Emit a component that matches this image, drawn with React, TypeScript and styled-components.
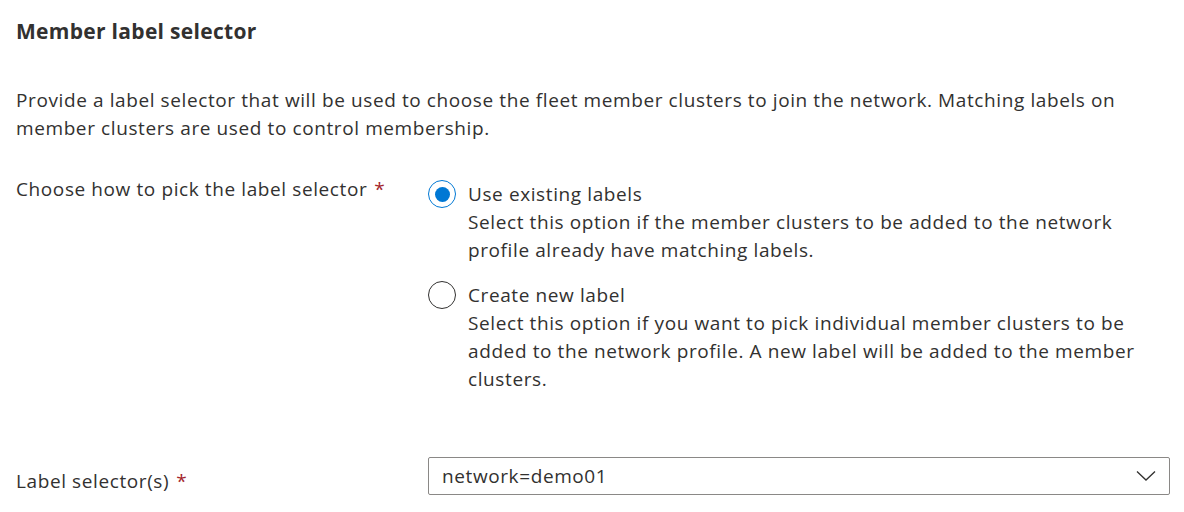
import styled, { createGlobalStyle } from 'styled-components';
import { FC, useState } from 'react';

const GlobalStyle = createGlobalStyle`
  body {
    margin: 0;
    background: #fff;
    font-family: 'Open Sans', 'Noto Sans', sans-serif;
    color: #323130;
  }
`;

type Option = {
  id: string;
  label: string;
  description: string;
};

const options: Option[] = [
  {
    id: 'existing',
    label: 'Use existing labels',
    description:
      'Select this option if the member clusters to be added to the network profile already have matching labels.',
  },
  {
    id: 'new',
    label: 'Create new label',
    description:
      'Select this option if you want to pick individual member clusters to be added to the network profile. A new label will be added to the member clusters.',
  },
];

const SC = {
  Section: styled.section`
    padding: 17px 14px 0 16px;
    font-size: 19px;
    letter-spacing: 0.6px;
    line-height: 28px;
  `,
  Title: styled.h2`
    margin: 0;
    font-size: 21px;
    letter-spacing: 0.3px;
    line-height: 28px;
    font-weight: 700;
  `,
  Intro: styled.p`
    margin: 41px 0 33px;
  `,
  FieldRow: styled.div<{ $gap?: number }>`
    display: grid;
    grid-template-columns: 412px 1fr;
    align-items: start;
    margin-top: ${(p) => p.$gap ?? 0}px;
  `,
  FieldLabel: styled.label<{ $offset?: number }>`
    padding-top: ${(p) => p.$offset ?? 0}px;
  `,
  Required: styled.span`
    color: #a4262c;
    margin-left: 7px;
  `,
  RadioGroup: styled.div`
    display: flex;
    flex-direction: column;
    row-gap: 17px;
    padding-top: 5px;
  `,
  RadioOption: styled.label`
    display: flex;
    column-gap: 12px;
    cursor: pointer;
  `,
  RadioCircle: styled.span<{ $checked: boolean }>`
    flex: none;
    box-sizing: border-box;
    width: 28px;
    height: 28px;
    border-radius: 50%;
    border: ${(p) => (p.$checked ? '1.5px solid #0078d4' : '1px solid #323130')};
    display: flex;
    align-items: center;
    justify-content: center;

    &::after {
      content: '';
      width: 15px;
      height: 15px;
      border-radius: 50%;
      background: ${(p) => (p.$checked ? '#0078d4' : 'transparent')};
    }
  `,
  OptionText: styled.div`
    display: flex;
    flex-direction: column;
  `,
  Dropdown: styled.div`
    box-sizing: border-box;
    height: 38px;
    display: flex;
    align-items: center;
    justify-content: space-between;
    padding: 0 13px 0 13px;
    border: 1px solid #8a8886;
    border-radius: 2px;
  `,
  Chevron: styled.svg`
    width: 20px;
    height: 12px;
  `,
};

const App: FC = () => {
  const [picked, setPicked] = useState('existing');

  return (
    <>
      <GlobalStyle />
      <SC.Section>
        <SC.Title>Member label selector</SC.Title>
        <SC.Intro>
          Provide a label selector that will be used to choose the fleet member clusters to join the
          network. Matching labels on member clusters are used to control membership.
        </SC.Intro>

        <SC.FieldRow>
          <SC.FieldLabel>
            Choose how to pick the label selector<SC.Required>*</SC.Required>
          </SC.FieldLabel>
          <SC.RadioGroup>
            {options.map((o) => (
              <SC.RadioOption key={o.id} onClick={() => setPicked(o.id)}>
                <SC.RadioCircle $checked={picked === o.id} />
                <SC.OptionText>
                  <span>{o.label}</span>
                  <span>{o.description}</span>
                </SC.OptionText>
              </SC.RadioOption>
            ))}
          </SC.RadioGroup>
        </SC.FieldRow>

        <SC.FieldRow $gap={64}>
          <SC.FieldLabel $offset={10}>
            Label selector(s)<SC.Required>*</SC.Required>
          </SC.FieldLabel>
          <SC.Dropdown>
            <span>network=demo01</span>
            <SC.Chevron viewBox="0 0 20 12">
              <polyline points="1,1.5 10,10 19,1.5" fill="none" stroke="#323130" strokeWidth="1.3" />
            </SC.Chevron>
          </SC.Dropdown>
        </SC.FieldRow>
      </SC.Section>
    </>
  );
};

export default App;
